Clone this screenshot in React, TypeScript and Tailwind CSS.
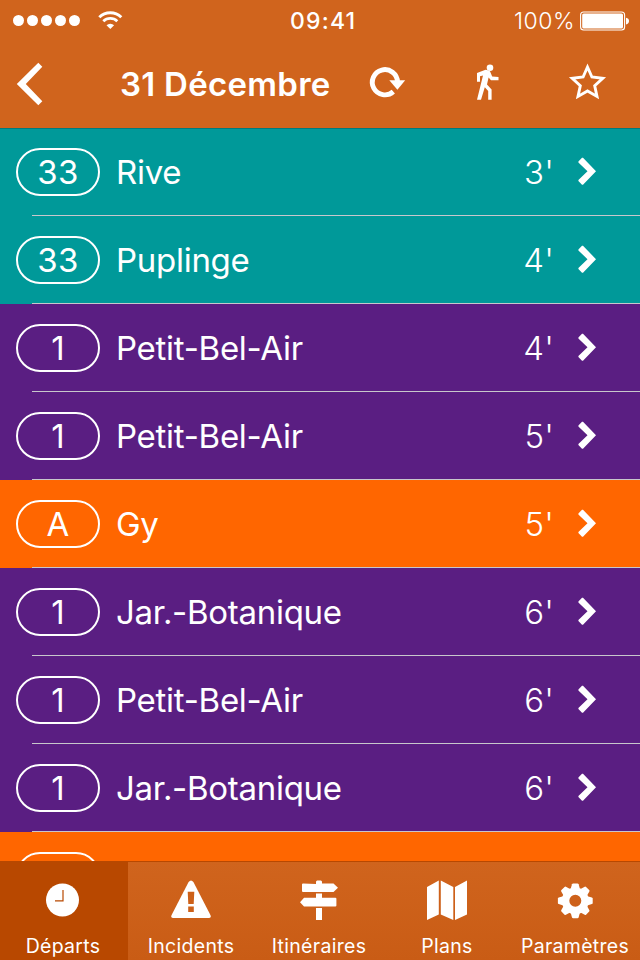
import React from 'react';

type Departure = { line: string; name: string; wait: string; bg: string };

const teal = 'bg-[#009999]';
const purple = 'bg-[#5a1e82]';
const orange = 'bg-[#ff6600]';

const departures: Departure[] = [
  { line: '33', name: 'Rive', wait: "3'", bg: 'bg-[linear-gradient(#007a7a_1px,#009999_1px)]' },
  { line: '33', name: 'Puplinge', wait: "4'", bg: teal },
  { line: '1', name: 'Petit-Bel-Air', wait: "4'", bg: purple },
  { line: '1', name: 'Petit-Bel-Air', wait: "5'", bg: purple },
  { line: 'A', name: 'Gy', wait: "5'", bg: orange },
  { line: '1', name: 'Jar.-Botanique', wait: "6'", bg: purple },
  { line: '1', name: 'Petit-Bel-Air', wait: "6'", bg: purple },
  { line: '1', name: 'Jar.-Botanique', wait: "6'", bg: purple },
];

function StatusBar() {
  return (
    <div className="flex h-10 items-center">
      <div className="ml-[13px] flex w-[67px] justify-between">
        {[0, 1, 2, 3, 4].map((i) => (
          <span key={i} className="mt-px size-[11px] rounded-full bg-white" />
        ))}
      </div>
      <svg className="ml-[18px]" width="26" height="20" viewBox="0 0 26 20" fill="none" stroke="#fff">
        <path d="M1.3 7.3a15.6 15.6 0 0 1 22 0" strokeWidth="2.9" />
        <path d="M5.3 11.2a10 10 0 0 1 14 0" strokeWidth="2.7" />
        <path d="M8.5 15.2a5.4 5.4 0 0 1 7.6 0L12.3 19Z" fill="#fff" stroke="none" />
      </svg>
      <span className="ml-[166px] w-[70px] pt-[2px] text-[23px] font-medium leading-[38px] tracking-[1.2px]">09:41</span>
      <span className="ml-[154px] w-[66px] whitespace-nowrap pt-[2px] text-[23px] font-light leading-[38px] tracking-[0.5px]">
        100%
      </span>
      <svg className="mt-px" width="50" height="20" viewBox="0 0 50 20">
        <rect x="0.6" y="1" width="44" height="18" rx="3" fill="none" stroke="#fff" strokeWidth="1.1" />
        <rect x="2.2" y="2.6" width="40.8" height="14.8" rx="1.5" fill="#fff" />
        <path d="M46 6.8q3 .5 3 3.3t-3 3.3Z" fill="#fff" />
      </svg>
    </div>
  );
}

function TitleBar() {
  return (
    <div className="flex h-[88px]">
      <svg width="120" height="88" viewBox="0 40 120 88">
        <path d="M16.8 84 38.3 62.7 42.3 66.7 25.8 84 42.3 101.3 38.3 105.3Z" fill="#fff" />
      </svg>
      <h1 className="w-[240px] whitespace-nowrap text-[33px] font-semibold leading-[88px] tracking-[0.28px]">
        31 Décembre
      </h1>
      <svg width="280" height="88" viewBox="360 40 280 88" fill="none" stroke="#fff">
        <path d="M397.5 82a12.6 12.6 0 1 0-4.2 9.6" strokeWidth="4.9" />
        <path d="M389.3 80.2H405.2L397.4 89.8Z" fill="#fff" stroke="none" />
        <g fill="#fff" stroke="none">
          <circle cx="490" cy="67.7" r="3.3" />
          <path d="M477 73 485.5 69.8Q488 69.8 490 71.3L492.2 76.5 498.5 77V80.2H491L488.6 77.5 487 84.5 491.6 89.5V99.7H488.2V91L484.8 87.2 481 99.7H477L483 75.5 480 76.3V81.7H477Z" />
        </g>
        <path
          d="M587.5 67 591.9 77 602.8 78.3 594.7 85.8 597 96.4 587.5 91 578 96.4 580.3 85.8 572.2 78.3 583.1 77Z"
          strokeWidth="2.9"
          strokeLinejoin="miter"
        />
      </svg>
    </div>
  );
}

const pill = 'flex h-12 w-[84px] items-center justify-center rounded-full border-2 border-white';

function Row({ d }: { d: Departure }) {
  return (
    <li className={`flex h-[88px] shrink-0 flex-col ${d.bg}`}>
      <div className="flex h-[87px] items-center pl-4 pt-px">
        <span className={`${pill} pt-[2px] text-[33px] tracking-[0.3px]`}>{d.line}</span>
        <span className="ml-4 flex-1 whitespace-nowrap pt-[2px] text-[33px] tracking-[-0.28px]">{d.name}</span>
        <span className="mr-[23px] pt-[2px] text-[33px] font-[340] tracking-[0.2px]">{d.wait}</span>
        <svg className="mr-[43px]" width="20" height="30" viewBox="0 0 20 30">
          <path d="M5 .8H6L19 14.2 6 27.7H5L1.4 24.1V23L10.5 14.2 1.4 5.4V4.4Z" fill="#fff" />
        </svg>
      </div>
      <div className="ml-8 h-px bg-[#c8c7cc]" />
    </li>
  );
}

function ClockIcon() {
  return (
    <svg width="42" height="42" viewBox="0 0 42 42">
      <circle cx="20.5" cy="20" r="16.5" fill="#fff" />
      <path d="M21 10v10.8H13" fill="none" stroke="#b84800" strokeWidth="1.2" />
    </svg>
  );
}

function WarningIcon() {
  return (
    <svg width="42" height="42" viewBox="0 0 42 42">
      <path d="M18.6 2Q21 -1 23.4 2L40.4 35Q41.7 38 38.5 38H3.5Q.3 38 1.6 35Z" fill="#fff" />
      <path d="M17.7 11.8H24.3L23.7 24H18.3Z M18.2 26.5H23.8V32H18.2Z" fill="#cd6018" />
    </svg>
  );
}

function SignIcon() {
  return (
    <svg width="42" height="42" viewBox="0 0 42 42" fill="#fff">
      <path d="M18 4V1.5L19 .5H23L24 1.5V3.5H35.5L40 7.7 35.5 12H5Q4 12 4 11V4.5Q4 3.5 5 3.5Z" />
      <path d="M18 13.5H24V17.8H37.4Q38.4 17.8 38.4 18.8V25.4Q38.4 26.4 37.4 26.4H6L2 22.2 6 17.8H18Z" />
      <path d="M18 28H24V40H18Z" />
    </svg>
  );
}

function MapIcon() {
  return (
    <svg width="42" height="42" viewBox="0 0 42 42" fill="#fff">
      <path d="M1 7 12.8.5V34.5L1 40Z M14.8.5 27.3 7V40L14.8 34.5Z M29 7 41 .5V34.5L29 40Z" />
    </svg>
  );
}

const teeth = [0, 45, 90, 135, 180, 225, 270, 315];

function GearIcon() {
  return (
    <svg width="42" height="42" viewBox="0 0 42 42">
      <g fill="#fff" transform="translate(21.3 20.8)">
        {teeth.map((a) => (
          <path key={a} d="M-4.6-12-3.3-16.6Q-3-17.4-2.2-17.4H2.2Q3-17.4 3.3-16.6L4.6-12Z" transform={`rotate(${a})`} />
        ))}
        <circle r="9.7" fill="none" stroke="#fff" strokeWidth="7.4" />
      </g>
    </svg>
  );
}

const tabs = [
  { label: 'Départs', Icon: ClockIcon, style: 'bg-[#b84800]' },
  { label: 'Incidents', Icon: WarningIcon, style: '' },
  { label: 'Itinéraires', Icon: SignIcon, style: '' },
  { label: 'Plans', Icon: MapIcon, style: '' },
  { label: 'Paramètres', Icon: GearIcon, style: '' },
];

export default function App() {
  return (
    <div className="flex h-[960px] w-[640px] flex-col overflow-hidden font-['Inter','Liberation_Sans',sans-serif] text-white">
      <header className="h-32 shrink-0 bg-[#d0641d]">
        <StatusBar />
        <TitleBar />
      </header>
      <ul className="flex h-[733px] shrink-0 flex-col overflow-hidden">
        {departures.map((d, i) => (
          <Row key={i} d={d} />
        ))}
        <li className={`h-[88px] shrink-0 pl-4 pt-5 ${orange}`}>
          <span className={pill} />
        </li>
      </ul>
      <nav className="flex h-[99px] shrink-0 border-t border-[#b84800] bg-linear-to-b from-[#d0641d] to-[#c95c15]">
        {tabs.map(({ label, Icon, style }) => (
          <div key={label} className={`flex w-32 flex-col items-center pr-[2px] pt-[18px] ${style}`}>
            <Icon />
            <span className="mt-[10px] whitespace-nowrap text-[19.5px] leading-7 tracking-[0.3px]">{label}</span>
          </div>
        ))}
      </nav>
    </div>
  );
}
